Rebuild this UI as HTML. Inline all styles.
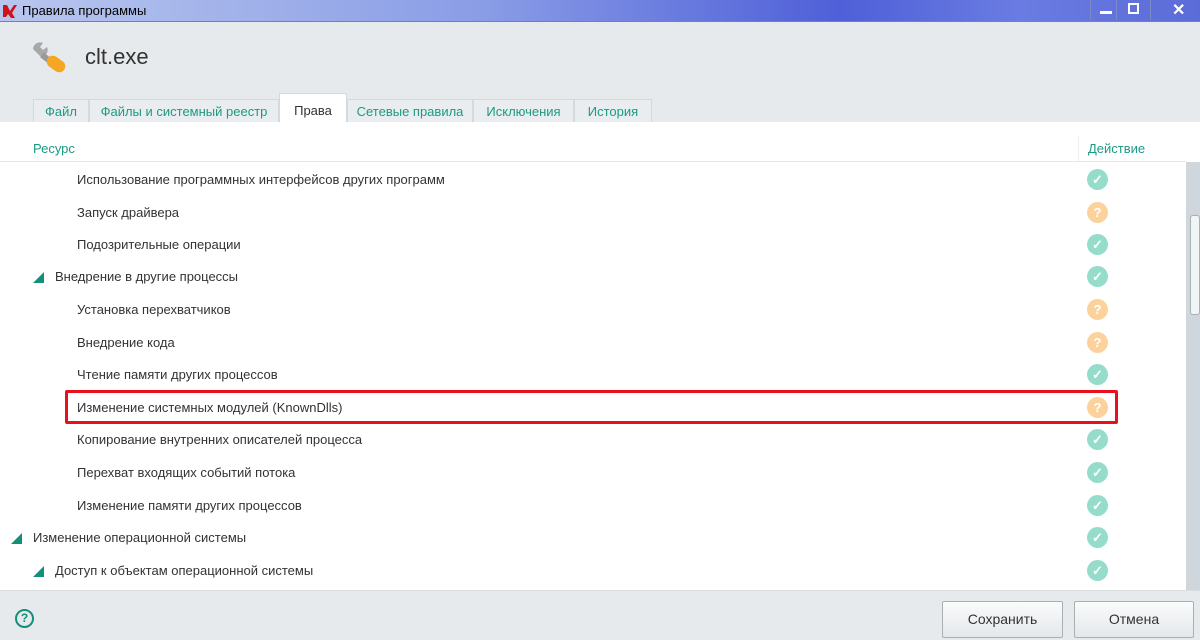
<!DOCTYPE html>
<html><head><meta charset="utf-8"><style>
*{margin:0;padding:0;box-sizing:border-box}
body{width:1200px;height:640px;overflow:hidden;background:#e6eaed;font-family:"Liberation Sans",sans-serif;position:relative;font-size:13px;color:#333}
.title{position:absolute;left:0;top:0;width:1200px;height:22px;background:linear-gradient(90deg,#b8c6ee 0%,#8a9de6 40%,#4f5fd8 70%,#6a7ce2 85%,#5b6bd8 100%);border-bottom:1px solid #6f7fb8}
.title span{position:absolute;left:22px;top:3px;font-size:13px;color:#000}
.abs{position:absolute}
.tab{position:absolute;top:99px;height:24px;border:1px solid #d4d9dd;border-bottom:none;background:#e9edef;color:#1c9a84;font-size:13px;padding-top:4px;text-align:center}
.row{position:absolute;left:0;width:1186px;height:32px;font-size:13px;color:#333}
.row span{position:absolute;top:9px}
.ic{position:absolute;left:1087px;top:6px;width:21px;height:21px;border-radius:50%;color:#fff;font-weight:bold;font-size:13px;text-align:center;line-height:21px}
.ok{background:#95dccb}
.q{background:#fcd29c}
.tri{position:absolute;top:12px;width:0;height:0;border-left:11px solid transparent;border-bottom:11px solid #12907a}
.btn{position:absolute;top:601px;height:37px;border:1px solid #a9afb3;border-radius:2px;background:linear-gradient(#fafbfb,#e4e8ea);font-size:14px;text-align:center;line-height:35px;color:#333}
</style></head><body>
<div class="title"><svg class="abs" style="left:2px;top:3px" width="16" height="16"><path d="M1 2h4l3 6 4-6h3l-5 8 3 5h-4l-3-4-2 3H1z" fill="#d0101a"/></svg><span>Правила программы</span>
<div class="abs" style="left:1090px;top:0;width:110px;height:20px;border-left:1px solid #7b89c8"></div>
<div class="abs" style="left:1116px;top:0;width:1px;height:20px;background:#7b89c8"></div>
<div class="abs" style="left:1150px;top:0;width:1px;height:20px;background:#7b89c8"></div>
<div class="abs" style="left:1100px;top:11px;width:12px;height:3px;background:#fff"></div>
<div class="abs" style="left:1128px;top:3px;width:11px;height:11px;border:2px solid #fff"></div>
<div class="abs" style="left:1172px;top:0;color:#fff;font-size:16px;font-weight:bold">✕</div>
</div>
<svg class="abs" style="left:30px;top:40px" width="40" height="36"><path d="M3 9a7 7 0 0 1 10-6l-3 4 3 3 4-3a7 7 0 0 1-6 10z" fill="#a8a8a8"/><path d="M12 15l8 6" stroke="#9a9a9a" stroke-width="6"/><rect x="16" y="18" width="20" height="12" rx="6" transform="rotate(35 26 24)" fill="#f5a623"/></svg>
<div class="abs" style="left:85px;top:44px;font-size:22px;color:#333">clt.exe</div>
<div class="tab" style="left:33px;width:56px">Файл</div>
<div class="tab" style="left:89px;width:190px">Файлы и системный реестр</div>
<div class="tab" style="left:279px;width:68px;top:93px;height:30px;background:#fff;color:#333;padding-top:9px">Права</div>
<div class="tab" style="left:347px;width:126px">Сетевые правила</div>
<div class="tab" style="left:473px;width:101px">Исключения</div>
<div class="tab" style="left:574px;width:78px">История</div>
<div class="abs" style="left:0;top:122px;width:1200px;height:468px;background:#fff"></div>
<div class="abs" style="left:33px;top:141px;color:#1c9a84;font-size:13px">Ресурс</div>
<div class="abs" style="left:1078px;top:136px;width:108px;height:25px;border-left:1px solid #eee;color:#1c9a84;padding:5px 0 0 9px">Действие</div>
<div class="abs" style="left:0;top:161px;width:1186px;height:1px;background:#e5e8ea"></div>
<div class="abs" style="left:1186px;top:162px;width:14px;height:428px;background:#cfd7dc"></div>
<div class="abs" style="left:1190px;top:215px;width:10px;height:100px;background:#f2f5f5;border:1px solid #a6b0b5;border-radius:3px"></div>
<div class="row" style="top:163px"><span style="left:77px">Использование программных интерфейсов других программ</span><div class="ic ok">✓</div></div>
<div class="row" style="top:196px"><span style="left:77px">Запуск драйвера</span><div class="ic q">?</div></div>
<div class="row" style="top:228px"><span style="left:77px">Подозрительные операции</span><div class="ic ok">✓</div></div>
<div class="row" style="top:260px"><div class="tri" style="left:33px"></div><span style="left:55px">Внедрение в другие процессы</span><div class="ic ok">✓</div></div>
<div class="row" style="top:293px"><span style="left:77px">Установка перехватчиков</span><div class="ic q">?</div></div>
<div class="row" style="top:326px"><span style="left:77px">Внедрение кода</span><div class="ic q">?</div></div>
<div class="row" style="top:358px"><span style="left:77px">Чтение памяти других процессов</span><div class="ic ok">✓</div></div>
<div class="row" style="top:391px"><span style="left:77px">Изменение системных модулей (KnownDlls)</span><div class="ic q">?</div></div>
<div class="row" style="top:423px"><span style="left:77px">Копирование внутренних описателей процесса</span><div class="ic ok">✓</div></div>
<div class="row" style="top:456px"><span style="left:77px">Перехват входящих событий потока</span><div class="ic ok">✓</div></div>
<div class="row" style="top:489px"><span style="left:77px">Изменение памяти других процессов</span><div class="ic ok">✓</div></div>
<div class="row" style="top:521px"><div class="tri" style="left:11px"></div><span style="left:33px">Изменение операционной системы</span><div class="ic ok">✓</div></div>
<div class="row" style="top:554px"><div class="tri" style="left:33px"></div><span style="left:55px">Доступ к объектам операционной системы</span><div class="ic ok">✓</div></div>
<div class="abs" style="left:65px;top:390px;width:1053px;height:34px;border:3px solid #e8101a;border-radius:2px"></div>
<div class="abs" style="left:0;top:590px;width:1200px;height:1px;background:#d8dde0"></div>
<div class="abs" style="left:15px;top:609px;width:19px;height:19px;border:2px solid #12907a;border-radius:50%;color:#12907a;font-weight:bold;font-size:12px;text-align:center;line-height:15px">?</div>
<div class="btn" style="left:942px;width:121px">Сохранить</div>
<div class="btn" style="left:1074px;width:120px">Отмена</div>
</body></html>
